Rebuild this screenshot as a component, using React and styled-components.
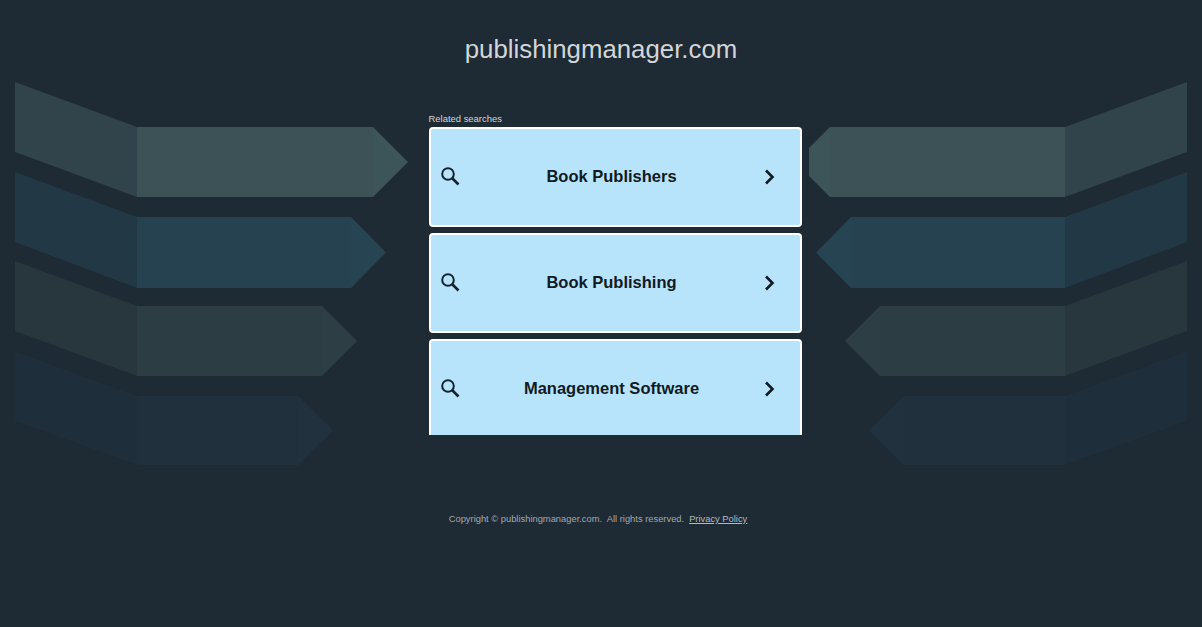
import React from 'react';
import styled, { createGlobalStyle } from 'styled-components';

const GlobalStyle = createGlobalStyle`
    html, body {
        margin: 0;
        padding: 0;
        background-color: #1e2a34;
    }
    * {
        box-sizing: border-box;
    }
`;

const Page = styled.div`
    position: relative;
    width: 100%;
    height: 627px;
    overflow: hidden;
    background-color: #1e2a34;
    font-family: 'Liberation Sans', Arial, sans-serif;
`;

const Backdrop = styled.svg`
    position: absolute;
    top: 0;
    left: 0;
`;

const Content = styled.div`
    position: relative;
    display: flex;
    flex-direction: column;
    align-items: center;
`;

const Title = styled.h1`
    margin: 33px 0 0 0;
    height: 32px;
    font-size: 25.8px;
    line-height: 32px;
    font-weight: 400;
    color: #d2d6d8;
`;

const SearchColumn = styled.div`
    width: 373px;
    margin: 47px 0 0 28px;
`;

const Label = styled.div`
    height: 15px;
    font-size: 9.45px;
    line-height: 13px;
    color: #d2d6d8;
`;

const ResultList = styled.div`
    display: flex;
    flex-direction: column;
    gap: 6px;
    height: 308px;
    overflow: hidden;
`;

const ResultLink = styled.a`
    flex: none;
    display: flex;
    align-items: center;
    height: 100px;
    padding: 0 23px 0 10px;
    background-color: #b8e4fb;
    border: solid 2px #ffffff;
    border-radius: 4px;
    color: #111a22;
    text-decoration: none;
    cursor: pointer;
`;

const ResultText = styled.span`
    flex: 1;
    margin-top: -1px;
    text-align: center;
    font-size: 16.5px;
    font-weight: 700;
`;

const IconBox = styled.svg`
    flex: none;
    display: block;
`;

const Footer = styled.div`
    margin: 76px 0 0 -6px;
    display: flex;
    align-items: center;
    font-size: 9.35px;
    line-height: 14px;
    color: #a3a9ad;
    white-space: pre;
`;

const PolicyLink = styled.a`
    margin: 1px 0 0 5px;
    color: #b4b9bd;
    text-decoration: underline;
    cursor: pointer;
`;

const bands = [
    { y: 82, height: 115, wing: '#32444b', body: '#3c5257', tip: '#3d5459', leftTip: 408, rightTip: 809 },
    { y: 172, height: 116, wing: '#223945', body: '#264251', tip: '#274452', leftTip: 386, rightTip: 816 },
    { y: 261, height: 115, wing: '#28363d', body: '#2c3d44', tip: '#2d3e45', leftTip: 357, rightTip: 845 },
    { y: 351, height: 114, wing: '#1f2e3b', body: '#20303d', tip: '#21323e', leftTip: 333, rightTip: 869 },
];

const results = ['Book Publishers', 'Book Publishing', 'Management Software'];

function Band({ y, height, wing, body, tip, leftTip, rightTip }) {
    const top = y + 45;
    const bottom = y + height;
    const mid = (top + bottom) / 2;
    const leftBase = leftTip - 35;
    const rightBase = rightTip + 35;
    const flat = rightTip === 809;
    const rightPoints = flat
        ? `830,${top} 809,${top + 21} 809,${bottom - 21} 830,${bottom}`
        : `${rightBase},${top} ${rightTip},${mid} ${rightBase},${bottom}`;
    return (
        <g>
            <polygon points={`15,${y} 137,${top} 137,${bottom} 15,${y + 70}`} fill={wing} />
            <polygon points={`137,${top} ${leftBase},${top} ${leftBase},${bottom} 137,${bottom}`} fill={body} />
            <polygon points={`${leftBase},${top} ${leftTip},${mid} ${leftBase},${bottom}`} fill={tip} />
            <polygon points={rightPoints} fill={tip} />
            <polygon
                points={`${flat ? 830 : rightBase},${top} 1065,${top} 1065,${bottom} ${flat ? 830 : rightBase},${bottom}`}
                fill={body}
            />
            <polygon points={`1065,${top} 1187,${y} 1187,${y + 70} 1065,${bottom}`} fill={wing} />
        </g>
    );
}

function SearchIcon() {
    return (
        <IconBox width="20" height="20" viewBox="0 0 20 20" fill="none" stroke="#14222e" strokeWidth="2">
            <circle cx="7" cy="7" r="5.8" />
            <path d="M11 11 L17.5 17.5" strokeWidth="2.6" />
        </IconBox>
    );
}

function ChevronIcon() {
    return (
        <IconBox width="14" height="18" viewBox="0 0 14 18" fill="none" stroke="#111a22" strokeWidth="2.6">
            <path d="M3 2.5 L9.5 9 L3 15.5" />
        </IconBox>
    );
}

export default function App() {
    return (
        <Page>
            <GlobalStyle />
            <Backdrop width="1202" height="627" viewBox="0 0 1202 627">
                {bands.map((band) => (
                    <Band key={band.y} {...band} />
                ))}
            </Backdrop>
            <Content>
                <Title>publishingmanager.com</Title>
                <SearchColumn>
                    <Label>Related searches</Label>
                    <ResultList>
                        {results.map((result) => (
                            <ResultLink key={result}>
                                <SearchIcon />
                                <ResultText>{result}</ResultText>
                                <ChevronIcon />
                            </ResultLink>
                        ))}
                    </ResultList>
                </SearchColumn>
                <Footer>
                    Copyright © publishingmanager.com.  All rights reserved.
                    <PolicyLink>Privacy Policy</PolicyLink>
                </Footer>
            </Content>
        </Page>
    );
}
